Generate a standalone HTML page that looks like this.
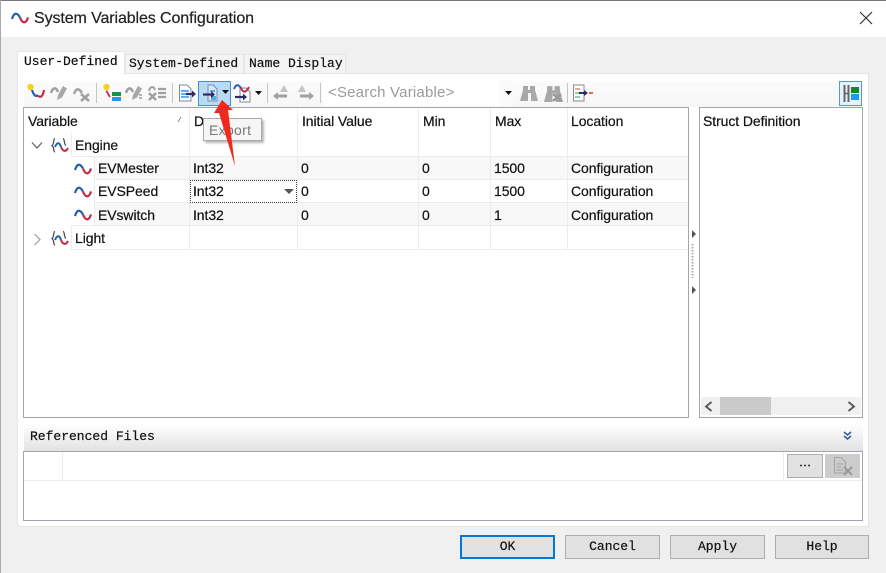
<!DOCTYPE html>
<html><head><meta charset="utf-8"><title>System Variables Configuration</title>
<style>
html,body{margin:0;padding:0;width:886px;height:573px;overflow:hidden;background:#f0f0f0}
#r{position:relative;width:886px;height:573px;overflow:hidden;filter:blur(.35px);font-family:"Liberation Sans",sans-serif;color:#222}
#r div,#r svg{position:absolute;box-sizing:border-box}
.m{font-family:"Liberation Mono",monospace;font-size:13px;line-height:16px;white-space:nowrap;color:#111;-webkit-text-stroke:.2px #111}
.t{font-size:14px;line-height:18px;white-space:nowrap;color:#111;letter-spacing:-.08px;-webkit-text-stroke:.2px #111}
.l{background:#ececec}
.b{background:#e1e1e1;border:1px solid #adadad;text-align:center;font-family:"Liberation Mono",monospace;font-size:13px;line-height:22px;color:#111;-webkit-text-stroke:.2px #111}
.sep{width:1px;height:20px;top:83px;background:#c4c4c4}
</style></head><body>
<div id="r">
<svg width="0" height="0" style="left:0;top:0"><defs>
<symbol id="w" viewBox="0 0 18 12"><path d="M1 7C3 .5 6 0 9 5.500" fill="none" stroke="#2460b0" stroke-width="2.200"/><path d="M9 5.500C11.500 12 15 12 17 5.500" fill="none" stroke="#c42a46" stroke-width="2.200"/></symbol>
<symbol id="g" viewBox="0 0 20 20"><path d="M5 2.500C3 2.500 4.500 8 2 9.500 4.500 11 3 16 5 16" fill="none" stroke="#444" stroke-width="1.200"/><path d="M13 2.500C15 2.500 13.500 8 16 9.500" fill="none" stroke="#444" stroke-width="1.200"/><path d="M5 11C7 6 9.500 6 11 11" fill="none" stroke="#2460b0" stroke-width="2"/><path d="M11 11C13 16 16 16 18 12" fill="none" stroke="#c42a46" stroke-width="2"/></symbol>
<symbol id="d" viewBox="0 0 18 20"><path d="M1.500 2H9L13 6V18H1.500Z" fill="#fff" stroke="#7f8a99" stroke-width="1"/><path d="M3 8h8M3 11h6M3 14h8" stroke="#2f93e8" stroke-width="1.500"/></symbol>
<symbol id="ga" viewBox="0 0 18 18"><path d="M1 9C3 3 6 3 8 8" fill="none" stroke="#a0a0a0" stroke-width="2.600"/><path d="M7 16L8 11 13 2l4 2.500-5 9Z" fill="#a8a8a8"/></symbol>
<symbol id="gx" viewBox="0 0 18 18"><path d="M1 9C3 3 6 3 9 8" fill="none" stroke="#a0a0a0" stroke-width="2.400"/><path d="M8 9l8 7M16 9l-8 7" stroke="#a0a0a0" stroke-width="2.600"/></symbol>
<symbol id="bn" viewBox="0 0 18 18"><path d="M3 2h5v4h2V2h5v4l3 11h-7V9H8v8H0L3 6Z" fill="#a8a8a8"/></symbol>
</defs></svg>

<!-- window -->
<div style="left:0;top:0;width:886px;height:37px;background:#fff"></div>
<div style="left:0;top:0;width:886px;height:1px;background:#777"></div>
<div style="left:0;top:0;width:1px;height:573px;background:#aaa"></div>
<svg style="left:11px;top:12px" width="18" height="12"><use href="#w"/></svg>
<div style="left:34px;top:9px;font-size:16px;line-height:20px;white-space:nowrap;color:#222;letter-spacing:-.1px;-webkit-text-stroke:.2px #222">System Variables Configuration</div>
<svg style="left:859px;top:11px" width="14" height="14"><path d="M1 1l12 12M13 1L1 13" stroke="#333" stroke-width="1.200"/></svg>

<!-- tabs/panel -->
<div style="left:17px;top:73px;width:852px;height:454px;background:#fff;border:1px solid #e6e6e6"></div>
<div style="left:125px;top:54px;width:119px;height:20px;background:#f4f4f4;border:1px solid #e6e6e6"></div>
<div style="left:244px;top:54px;width:102px;height:20px;background:#f4f4f4;border:1px solid #e6e6e6"></div>
<div style="left:17px;top:51px;width:108px;height:24px;background:#fff;border:1px solid #e6e6e6;border-bottom:0"></div>
<div class="m" style="left:24px;top:54px">User-Defined</div>
<div class="m" style="left:129px;top:56px">System-Defined</div>
<div class="m" style="left:249px;top:56px">Name Display</div>

<!-- toolbar -->
<div style="left:24px;top:81px;width:838px;height:26px;background:linear-gradient(#fbfbfb,#f6f6f6)"></div>
<div style="left:323px;top:80px;width:176px;height:26px;background:#fff"></div>
<div style="left:499px;top:80px;width:16px;height:26px;background:#fafafa"></div>

<svg style="left:26px;top:83px" width="20" height="19" viewBox="0 0 20 19"><circle cx="4.500" cy="4" r="3.200" fill="#f5d020"/><path d="M6 7C8 13 10 14 12 12" fill="none" stroke="#2460b0" stroke-width="2.200"/><path d="M12 13C15 15 17 13 18 7" fill="none" stroke="#c42a46" stroke-width="2.200"/></svg>
<svg style="left:50px;top:84px" width="18" height="18"><use href="#ga"/></svg>
<svg style="left:73px;top:85px" width="18" height="18"><use href="#gx"/></svg>
<div class="sep" style="left:96px"></div>
<svg style="left:102px;top:83px" width="20" height="20" viewBox="0 0 20 20"><circle cx="4.500" cy="4" r="3.200" fill="#f5d020"/><path d="M4 8C6 9 6 12 8 14" fill="none" stroke="#c42a46" stroke-width="1.800"/><rect x="10" y="9" width="9" height="4" fill="#0f9548"/><rect x="10" y="14" width="9" height="4" fill="#2198f0"/></svg>
<svg style="left:125px;top:84px" width="18" height="18"><use href="#ga"/><path d="M14 11h3M14 14h3" stroke="#a8a8a8" stroke-width="1.800"/></svg>
<svg style="left:148px;top:84px" width="19" height="18" viewBox="0 0 19 18"><path d="M1 7C2 2 6 2 7 6" fill="none" stroke="#a0a0a0" stroke-width="2"/><path d="M1 9l7 7M8 9l-7 7" stroke="#a0a0a0" stroke-width="2.600"/><path d="M10 5h8M10 9h8M10 13h8" stroke="#a0a0a0" stroke-width="2.200"/></svg>
<div class="sep" style="left:172px"></div>
<svg style="left:178px;top:83px" width="18" height="20"><use href="#d"/><path d="M8 11h7" stroke="#2c2c66" stroke-width="2.200"/><path d="M14 7.500l4 3.500-4 3.500Z" fill="#2c2c66"/></svg>

<div style="left:198px;top:81px;width:33px;height:25px;background:#b9d9f5;border:1.500px solid #3c93dc"></div>
<svg style="left:202px;top:83px" width="18" height="20" viewBox="0 0 18 20"><path d="M6 2H11L15 6V18H6Z" fill="#d6e8f8" stroke="#7f8a99"/><path d="M8 8h5M9 14h5M9 16h5" stroke="#2f93e8" stroke-width="1.400"/><path d="M1 11.500h9" stroke="#2c2c66" stroke-width="2.200"/><path d="M9 8l4 3.500-4 3.500Z" fill="#2c2c66"/></svg>
<svg style="left:222px;top:90px" width="7" height="5"><path d="M0 0h7L3.500 4Z" fill="#111"/></svg>

<svg style="left:233px;top:83px" width="20" height="21" viewBox="0 0 20 21"><path d="M7 5h6l4 4v10H7Z" fill="#fff" stroke="#7f8a99"/><path d="M1 6C3 1 5 1 8 5" fill="none" stroke="#2460b0" stroke-width="2"/><path d="M8 5C10 10 13 10 16 4" fill="none" stroke="#c42a46" stroke-width="2"/><path d="M2 14h9" stroke="#2c2c66" stroke-width="2.200"/><path d="M10 10.500l4 3.500-4 3.500Z" fill="#2c2c66"/></svg>
<svg style="left:255px;top:91px" width="7" height="5"><path d="M0 0h7L3.500 4Z" fill="#111"/></svg>
<div class="sep" style="left:267px"></div>
<svg style="left:272px;top:84px" width="19" height="18" viewBox="0 0 19 18"><path d="M12 1l4 7H8Z" fill="#c4c4c4"/><path d="M1 12l5-4v2.500h9v3H6V16Z" fill="#a0a0a0"/></svg>
<svg style="left:296px;top:84px" width="19" height="18" viewBox="0 0 19 18"><path d="M6 1l4 7H2Z" fill="#c4c4c4"/><path d="M18 12l-5-4v2.500H4v3h9V16Z" fill="#a0a0a0"/></svg>
<div class="sep" style="left:320px"></div>
<div style="left:328px;top:83px;font-size:15px;line-height:19px;color:#9a9a9a;white-space:nowrap;letter-spacing:.2px">&lt;Search Variable&gt;</div>
<svg style="left:505px;top:91px" width="7" height="5"><path d="M0 0h7L3.500 4Z" fill="#111"/></svg>
<svg style="left:520px;top:84px" width="18" height="18"><use href="#bn"/></svg>
<svg style="left:544px;top:84px" width="19" height="19"><use href="#bn"/><path d="M9 10l8 7M17 10l-8 7" stroke="#999" stroke-width="2.400"/></svg>
<div class="sep" style="left:567px"></div>
<svg style="left:572px;top:83px" width="22" height="20" viewBox="0 0 22 20"><path d="M1.500 2H12V18H1.500Z" fill="#fff" stroke="#8a8a8a"/><path d="M3 6h5" stroke="#e9a98c" stroke-width="2"/><path d="M3 10h5" stroke="#8fd0a8" stroke-width="2"/><path d="M3 14h5" stroke="#8fd0a8" stroke-width="2"/><path d="M7 10h6" stroke="#2c2c66" stroke-width="2"/><path d="M12 7l4 3-4 3Z" fill="#2c2c66"/><path d="M17 10h4" stroke="#ee6a4a" stroke-width="2"/></svg>

<div style="left:839px;top:81px;width:23px;height:25px;background:#e6f1fb;border:1.500px solid #4a9ce0"></div>
<svg style="left:842px;top:84px" width="18" height="19" viewBox="0 0 18 19"><path d="M2.500 1v17M6.500 1v17" stroke="#666" stroke-width="2"/><path d="M2 9.500h5" stroke="#666" stroke-width="1.500"/><rect x="9" y="3" width="8" height="6" fill="#0a8f1e"/><rect x="9" y="10" width="8" height="6" fill="#1e98f2"/></svg>

<!-- main table -->
<div style="left:23px;top:107px;width:666px;height:311px;background:#fff;border:1.500px solid #a2a5ad"></div>
<div style="left:94px;top:157px;width:594px;height:23px;background:#f8f8f8"></div>
<div style="left:94px;top:203px;width:594px;height:23px;background:#f8f8f8"></div>
<div class="l" style="left:71px;top:133px;width:1px;height:24px"></div>
<div class="l" style="left:71px;top:226px;width:1px;height:23px"></div>
<div class="l" style="left:94px;top:157px;width:1px;height:69px"></div>
<div class="l" style="left:189px;top:108px;width:1px;height:141px"></div>
<div class="l" style="left:297px;top:108px;width:1px;height:141px"></div>
<div class="l" style="left:418px;top:108px;width:1px;height:141px"></div>
<div class="l" style="left:490px;top:108px;width:1px;height:141px"></div>
<div class="l" style="left:567px;top:108px;width:1px;height:141px"></div>
<div class="l" style="left:71px;top:156px;width:617px;height:1px"></div>
<div class="l" style="left:94px;top:179px;width:594px;height:1px"></div>
<div class="l" style="left:94px;top:202px;width:594px;height:1px"></div>
<div class="l" style="left:71px;top:225px;width:617px;height:1px"></div>
<div class="l" style="left:71px;top:249px;width:617px;height:1px"></div>

<div class="t" style="left:28px;top:112px">Variable</div>
<svg style="left:177px;top:116px" width="5" height="7"><path d="M4 1L1 6" stroke="#888" stroke-width="1"/></svg>
<div class="t" style="left:194px;top:112px">D</div>
<div class="t" style="left:302px;top:112px">Initial Value</div>
<div class="t" style="left:423px;top:112px">Min</div>
<div class="t" style="left:495px;top:112px">Max</div>
<div class="t" style="left:571px;top:112px">Location</div>

<svg style="left:31px;top:141px" width="12" height="9"><path d="M1 1.500l5 5.500 5-5.500" fill="none" stroke="#666" stroke-width="1.300"/></svg>
<svg style="left:50px;top:136px" width="20" height="20"><use href="#g"/></svg>
<div class="t" style="left:75px;top:136px">Engine</div>

<svg style="left:74px;top:163px" width="18" height="12"><use href="#w"/></svg>
<div class="t" style="left:98px;top:159px">EVMester</div>
<svg style="left:74px;top:186px" width="18" height="12"><use href="#w"/></svg>
<div class="t" style="left:98px;top:182px">EVSPeed</div>
<svg style="left:74px;top:209px" width="18" height="12"><use href="#w"/></svg>
<div class="t" style="left:98px;top:206px">EVswitch</div>

<svg style="left:33px;top:233px" width="9" height="13"><path d="M1.500 1l5.500 5.500-5.500 5.500" fill="none" stroke="#aaa" stroke-width="1.300"/></svg>
<svg style="left:50px;top:229px" width="20" height="20"><use href="#g"/></svg>
<div class="t" style="left:75px;top:229px">Light</div>

<div class="t" style="left:193px;top:159px">Int32</div>
<div style="left:190px;top:180px;width:107px;height:23px;background:#fff;border:1px dotted #444"></div>
<div class="t" style="left:193px;top:182px">Int32</div>
<svg style="left:284px;top:189px" width="10" height="5"><path d="M0 0h10L5 5Z" fill="#555"/></svg>
<div class="t" style="left:193px;top:206px">Int32</div>

<div class="t" style="left:301px;top:159px">0</div><div class="t" style="left:301px;top:182px">0</div><div class="t" style="left:301px;top:206px">0</div>
<div class="t" style="left:422px;top:159px">0</div><div class="t" style="left:422px;top:182px">0</div><div class="t" style="left:422px;top:206px">0</div>
<div class="t" style="left:494px;top:159px">1500</div><div class="t" style="left:494px;top:182px">1500</div><div class="t" style="left:494px;top:206px">1</div>
<div class="t" style="left:571px;top:159px">Configuration</div><div class="t" style="left:571px;top:182px">Configuration</div><div class="t" style="left:571px;top:206px">Configuration</div>

<!-- splitter -->
<svg style="left:691px;top:230px" width="6" height="8"><path d="M1 0l4 4-4 4Z" fill="#555"/></svg>
<svg style="left:691px;top:286px" width="6" height="8"><path d="M1 0l4 4-4 4Z" fill="#555"/></svg>
<svg style="left:691px;top:244px" width="3" height="34"><path d="M1.500 0v34" stroke="#aaa" stroke-width="2" stroke-dasharray="1.500 1.500"/></svg>

<!-- right panel -->
<div style="left:699px;top:107px;width:164px;height:311px;background:#fff;border:1.500px solid #a2a5ad"></div>
<div class="t" style="left:703px;top:112px">Struct Definition</div>
<div style="left:701px;top:397px;width:160px;height:18px;background:#f0f0f0"></div>
<div style="left:720px;top:397px;width:51px;height:18px;background:#cacaca"></div>
<svg style="left:704px;top:401px" width="9" height="11"><path d="M7.500 1L2 5.500 7.500 10" fill="none" stroke="#555" stroke-width="1.800"/></svg>
<svg style="left:847px;top:401px" width="9" height="11"><path d="M1.500 1L7 5.500 1.500 10" fill="none" stroke="#555" stroke-width="1.800"/></svg>

<!-- referenced files -->
<div style="left:24px;top:424px;width:839px;height:27px;background:linear-gradient(#fff,#e2e2e2)"></div>
<div class="m" style="left:30px;top:429px">Referenced Files</div>
<svg style="left:843px;top:431px" width="9" height="10"><path d="M1 1l3.500 3L8 1M1 5l3.500 3L8 5" fill="none" stroke="#2d5d9e" stroke-width="1.500"/></svg>
<div style="left:23px;top:451px;width:840px;height:70px;background:#fff;border:1.500px solid #a2a5ad"></div>
<div class="l" style="left:24px;top:480px;width:838px;height:1px"></div>
<div class="l" style="left:62px;top:452px;width:1px;height:28px"></div>
<div class="l" style="left:783px;top:452px;width:1px;height:28px"></div>
<div style="left:787px;top:454px;width:36px;height:24px;background:#e1e1e1;border:1px solid #adadad"></div>
<svg style="left:799px;top:464px" width="12" height="3"><path d="M1 1.500h10" stroke="#333" stroke-width="1.500" stroke-dasharray="2 2"/></svg>
<div style="left:825px;top:454px;width:35px;height:24px;background:#cccccc"></div>
<svg style="left:833px;top:456px" width="22" height="21" viewBox="0 0 22 21"><path d="M1.500 1.500H8L12.500 6V17H1.500Z" fill="none" stroke="#a5a5a5"/><path d="M3.500 8h7M3.500 11h5M3.500 14h7" stroke="#a5a5a5"/><path d="M11 11l8 8M19 11l-8 8" stroke="#999" stroke-width="2"/></svg>

<!-- buttons -->
<div class="b" style="left:460px;top:535px;width:95px;height:24px;border:2px solid #0078d7;line-height:20px">OK</div>
<div class="b" style="left:565px;top:535px;width:95px;height:24px">Cancel</div>
<div class="b" style="left:670px;top:535px;width:95px;height:24px">Apply</div>
<div class="b" style="left:775px;top:535px;width:94px;height:24px">Help</div>

<!-- tooltip -->
<div style="left:203px;top:118px;width:59px;height:23px;background:#f6f6f6;border:1px solid #a8a8a8;box-shadow:2px 2px 2px rgba(0,0,0,.28)"></div>
<div style="left:209px;top:121px;font-size:14px;line-height:18px;color:#777;white-space:nowrap;letter-spacing:.3px">Export</div>

<!-- annotation arrow -->
<svg style="left:210px;top:98px" width="30" height="72" viewBox="210 98 30 72"><path d="M222 100L233 110 228 110 235 166 219 113 214 113Z" fill="#f0291f"/></svg>
</div>
</body></html>
